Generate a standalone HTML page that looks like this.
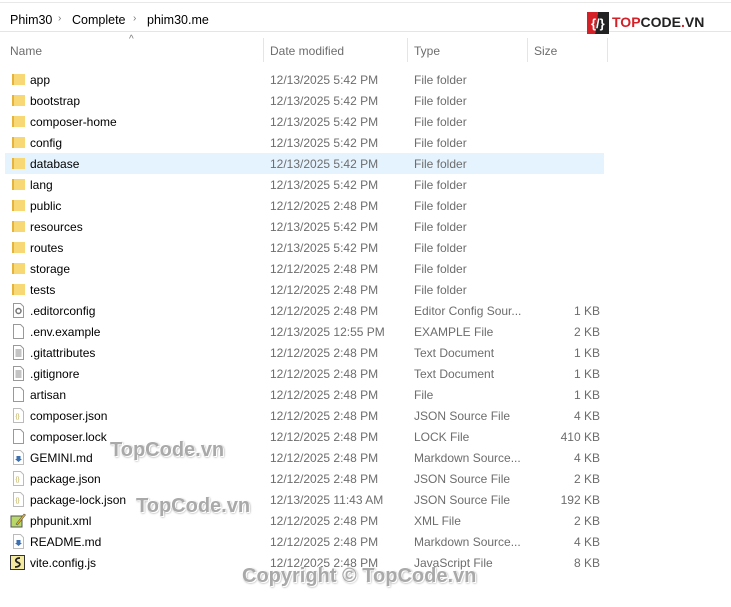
<!DOCTYPE html>
<html><head><meta charset="utf-8">
<style>
*{margin:0;padding:0;box-sizing:border-box}
body{width:731px;height:607px;background:#fff;font-family:"Liberation Sans",sans-serif;font-size:12px;color:#000;position:relative;overflow:hidden}
.a{position:absolute;white-space:nowrap}
.g{color:#6d6d6d}
.sep{position:absolute;top:38px;height:24px;width:1px;background:#e5e5e5}
.row{position:absolute;left:0;width:731px;height:21px}
.row .n{position:absolute;left:30px;top:4px}
.row .d{position:absolute;left:270px;top:4px;color:#6d6d6d}
.row .t{position:absolute;left:414px;top:4px;color:#6d6d6d}
.row .s{position:absolute;right:131px;top:4px;color:#6d6d6d}
.row .i{position:absolute;left:12px;top:3px;width:13px;height:15px}
.fold{position:absolute;left:12px;top:5px;width:13px;height:11px;background:#f8d775;border-left:2px solid #e4b43f}
.wm{position:absolute;color:#a9a9a9;font-weight:bold;font-size:20px;text-shadow:1px 1px 0 #fff,-1px -1px 0 #fff,1px 1px 2px #888;white-space:nowrap}
</style></head><body>
<div class="a" style="left:0;top:2px;width:731px;height:1px;background:#e8e8e8"></div>
<div class="a" style="left:0;top:31px;width:731px;height:1px;background:#e5e5e5"></div>
<div class="a" style="left:10px;top:13px;font-size:12.5px">Phim30</div>
<div class="a" style="left:58px;top:13px;color:#777;font-size:10px">›</div>
<div class="a" style="left:72px;top:13px;font-size:12.5px">Complete</div>
<div class="a" style="left:133px;top:13px;color:#777;font-size:10px">›</div>
<div class="a" style="left:147px;top:13px;font-size:12.5px">phim30.me</div>
<div class="a" style="left:586px;top:10px;width:24px;height:26px">
<svg width="24" height="26" viewBox="0 0 24 26"><path d="M1 2h11l-3 22H1z" fill="#d42027"/><path d="M12 2h11v22H9z" fill="#222"/><text x="5" y="18" fill="#fff" font-size="13" font-weight="bold" font-family="Liberation Sans">{/}</text></svg></div>
<div class="a" style="left:612px;top:14px;font-size:14px;font-weight:bold;letter-spacing:0px"><span style="color:#d42027">TOP</span><span style="color:#222">CODE</span><span style="color:#d42027">.</span><span style="color:#222">VN</span></div>
<div class="a" style="left:129px;top:34px;color:#777;font-size:10px">^</div>
<div class="a g" style="left:10px;top:44px">Name</div>
<div class="a g" style="left:270px;top:44px">Date modified</div>
<div class="a g" style="left:414px;top:44px">Type</div>
<div class="a g" style="left:534px;top:44px">Size</div>
<div class="sep" style="left:263px"></div><div class="sep" style="left:407px"></div><div class="sep" style="left:527px"></div><div class="sep" style="left:607px"></div>
<div class="a" style="left:5px;top:153px;width:599px;height:21px;background:#e5f3ff"></div>

<div class="row" style="top:69px"><div class="fold"></div><span class="n">app</span><span class="d">12/13/2025 5:42 PM</span><span class="t">File folder</span></div>
<div class="row" style="top:90px"><div class="fold"></div><span class="n">bootstrap</span><span class="d">12/13/2025 5:42 PM</span><span class="t">File folder</span></div>
<div class="row" style="top:111px"><div class="fold"></div><span class="n">composer-home</span><span class="d">12/13/2025 5:42 PM</span><span class="t">File folder</span></div>
<div class="row" style="top:132px"><div class="fold"></div><span class="n">config</span><span class="d">12/13/2025 5:42 PM</span><span class="t">File folder</span></div>
<div class="row" style="top:153px"><div class="fold"></div><span class="n">database</span><span class="d">12/13/2025 5:42 PM</span><span class="t">File folder</span></div>
<div class="row" style="top:174px"><div class="fold"></div><span class="n">lang</span><span class="d">12/13/2025 5:42 PM</span><span class="t">File folder</span></div>
<div class="row" style="top:195px"><div class="fold"></div><span class="n">public</span><span class="d">12/12/2025 2:48 PM</span><span class="t">File folder</span></div>
<div class="row" style="top:216px"><div class="fold"></div><span class="n">resources</span><span class="d">12/13/2025 5:42 PM</span><span class="t">File folder</span></div>
<div class="row" style="top:237px"><div class="fold"></div><span class="n">routes</span><span class="d">12/13/2025 5:42 PM</span><span class="t">File folder</span></div>
<div class="row" style="top:258px"><div class="fold"></div><span class="n">storage</span><span class="d">12/12/2025 2:48 PM</span><span class="t">File folder</span></div>
<div class="row" style="top:279px"><div class="fold"></div><span class="n">tests</span><span class="d">12/12/2025 2:48 PM</span><span class="t">File folder</span></div>

<div class="row" style="top:300px"><svg class="i" viewBox="0 0 13 15"><path d="M1.5 .5h7l3 3v11h-10z" fill="#fff" stroke="#999"/><circle cx="6.5" cy="8" r="2.5" fill="none" stroke="#777" stroke-width="1.5"/></svg><span class="n">.editorconfig</span><span class="d">12/12/2025 2:48 PM</span><span class="t">Editor Config Sour...</span><span class="s">1 KB</span></div>
<div class="row" style="top:321px"><svg class="i" viewBox="0 0 13 15"><path d="M1.5 .5h7l3 3v11h-10z" fill="#fff" stroke="#999"/></svg><span class="n">.env.example</span><span class="d">12/13/2025 12:55 PM</span><span class="t">EXAMPLE File</span><span class="s">2 KB</span></div>
<div class="row" style="top:342px"><svg class="i" viewBox="0 0 13 15"><path d="M1.5 .5h7l3 3v11h-10z" fill="#fff" stroke="#999"/><path d="M3.5 5h6M3.5 7h6M3.5 9h6M3.5 11h6" stroke="#888"/></svg><span class="n">.gitattributes</span><span class="d">12/12/2025 2:48 PM</span><span class="t">Text Document</span><span class="s">1 KB</span></div>
<div class="row" style="top:363px"><svg class="i" viewBox="0 0 13 15"><path d="M1.5 .5h7l3 3v11h-10z" fill="#fff" stroke="#999"/><path d="M3.5 5h6M3.5 7h6M3.5 9h6M3.5 11h6" stroke="#888"/></svg><span class="n">.gitignore</span><span class="d">12/12/2025 2:48 PM</span><span class="t">Text Document</span><span class="s">1 KB</span></div>
<div class="row" style="top:384px"><svg class="i" viewBox="0 0 13 15"><path d="M1.5 .5h7l3 3v11h-10z" fill="#fff" stroke="#999"/></svg><span class="n">artisan</span><span class="d">12/12/2025 2:48 PM</span><span class="t">File</span><span class="s">1 KB</span></div>
<div class="row" style="top:405px"><svg class="i" viewBox="0 0 13 15"><path d="M1.5 .5h7l3 3v11h-10z" fill="#fff" stroke="#bbb"/><text x="3.5" y="10" font-size="6" fill="#b9a640">{}</text></svg><span class="n">composer.json</span><span class="d">12/12/2025 2:48 PM</span><span class="t">JSON Source File</span><span class="s">4 KB</span></div>
<div class="row" style="top:426px"><svg class="i" viewBox="0 0 13 15"><path d="M1.5 .5h7l3 3v11h-10z" fill="#fff" stroke="#999"/></svg><span class="n">composer.lock</span><span class="d">12/12/2025 2:48 PM</span><span class="t">LOCK File</span><span class="s">410 KB</span></div>
<div class="row" style="top:447px"><svg class="i" viewBox="0 0 13 15"><path d="M1.5 .5h7l3 3v11h-10z" fill="#fff" stroke="#bbb"/><path d="M4.5 6h4v3h1.5l-3.5 3-3.5-3h1.5z" fill="#3a6fb0"/></svg><span class="n">GEMINI.md</span><span class="d">12/12/2025 2:48 PM</span><span class="t">Markdown Source...</span><span class="s">4 KB</span></div>
<div class="row" style="top:468px"><svg class="i" viewBox="0 0 13 15"><path d="M1.5 .5h7l3 3v11h-10z" fill="#fff" stroke="#bbb"/><text x="3.5" y="10" font-size="6" fill="#b9a640">{}</text></svg><span class="n">package.json</span><span class="d">12/12/2025 2:48 PM</span><span class="t">JSON Source File</span><span class="s">2 KB</span></div>
<div class="row" style="top:489px"><svg class="i" viewBox="0 0 13 15"><path d="M1.5 .5h7l3 3v11h-10z" fill="#fff" stroke="#bbb"/><text x="3.5" y="10" font-size="6" fill="#b9a640">{}</text></svg><span class="n">package-lock.json</span><span class="d">12/13/2025 11:43 AM</span><span class="t">JSON Source File</span><span class="s">192 KB</span></div>
<div class="row" style="top:510px"><svg class="i" style="left:10px;width:16px" viewBox="0 0 16 15"><rect x="1" y="3" width="11" height="11" fill="#b8d96a" stroke="#555"/><path d="M6 11l8-10 1.5 1-8 10z" fill="#e8b020" stroke="#555" stroke-width=".6"/></svg><span class="n">phpunit.xml</span><span class="d">12/12/2025 2:48 PM</span><span class="t">XML File</span><span class="s">2 KB</span></div>
<div class="row" style="top:531px"><svg class="i" viewBox="0 0 13 15"><path d="M1.5 .5h7l3 3v11h-10z" fill="#fff" stroke="#bbb"/><path d="M4.5 6h4v3h1.5l-3.5 3-3.5-3h1.5z" fill="#3a6fb0"/></svg><span class="n">README.md</span><span class="d">12/12/2025 2:48 PM</span><span class="t">Markdown Source...</span><span class="s">4 KB</span></div>
<div class="row" style="top:552px"><svg class="i" style="left:10px;width:15px" viewBox="0 0 15 15"><rect x=".5" y=".5" width="14" height="14" fill="#f3eaa0" stroke="#333"/><path d="M10 3C6 3 4 6 8 7.5S9 12 5 12" fill="none" stroke="#222" stroke-width="1.8"/></svg><span class="n">vite.config.js</span><span class="d">12/12/2025 2:48 PM</span><span class="t">JavaScript File</span><span class="s">8 KB</span></div>

<div class="wm" style="left:110px;top:439px">TopCode.vn</div>
<div class="wm" style="left:136px;top:495px">TopCode.vn</div>
<div class="wm" style="left:242px;top:565px">Copyright © TopCode.vn</div>
</body></html>
